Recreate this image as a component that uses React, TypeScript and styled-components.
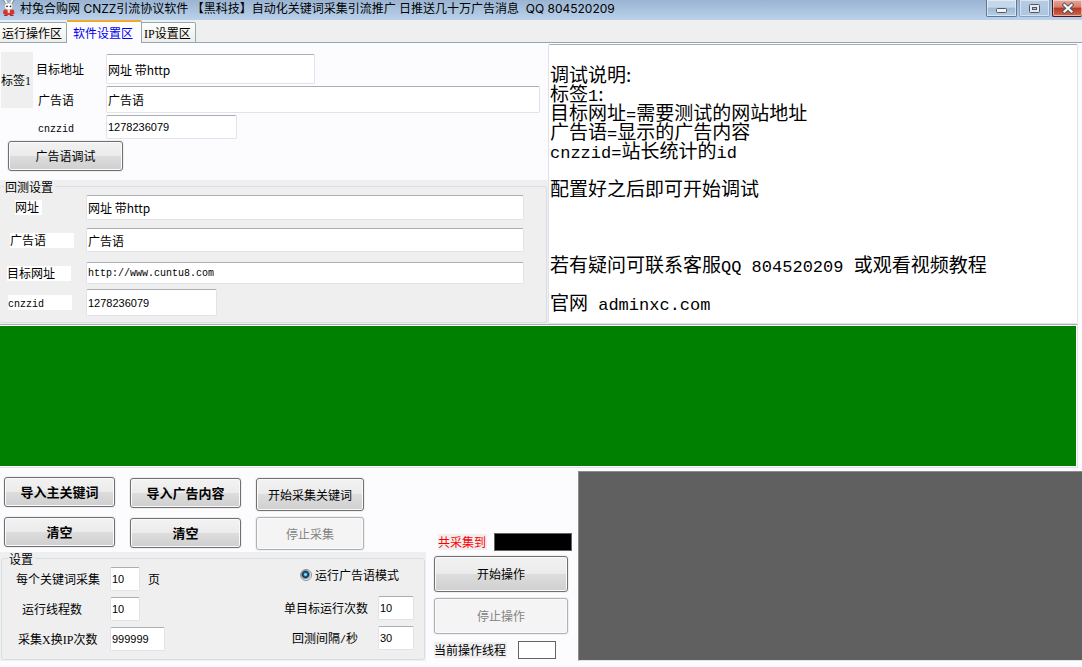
import React from "react";
import styled, { createGlobalStyle, css } from "styled-components";

const GlobalStyle = createGlobalStyle`
  *, *::before, *::after { box-sizing: border-box; }
  body {
    margin: 0;
    background: #fcfcff;
    color: #000;
    font-family: "Noto Sans CJK SC", sans-serif;
    font-size: 12px;
    line-height: 16px;
  }
  button, input { font: inherit; color: inherit; }
`;

const Window = styled.div`
  display: flex;
  flex-direction: column;
  min-height: 100vh;
  overflow-x: hidden;
`;

/* ---------- title bar ---------- */

const TitleBar = styled.header`
  display: flex;
  align-items: flex-start;
  height: 20px;
  padding-left: 1px;
  background: linear-gradient(#9ab4d1, #bad2eb);
`;

const TitleText = styled.h1`
  flex: 1;
  margin: 0 0 0 3px;
  font: 400 12px/18px Inter, "Noto Sans CJK SC", sans-serif;
  white-space: pre;
  overflow: hidden;
`;

const WindowButtons = styled.div`
  display: flex;
  gap: 2px;
`;

const WindowButton = styled.button<{ $tone: "normal" | "dim" | "close" }>`
  display: flex;
  align-items: center;
  justify-content: center;
  width: 31px;
  height: 17px;
  padding: 0;
  border: 1px solid #5f7896;
  border-top: 0;
  border-radius: 0 0 2px 2px;
  background: linear-gradient(#c5d7ea 45%, #9fb9d5 50%, #b7cee6);
  box-shadow: inset 0 0 0 1px rgba(255, 255, 255, 0.5);
  ${(p) => p.$tone === "dim" && css`
    border-color: #89a2c0;
    background: linear-gradient(#b6cbe3, #adc5e0);
  `}
  ${(p) => p.$tone === "close" && css`
    width: 30px;
    border-color: #4a1420;
    border-right: 0;
    background: linear-gradient(#e5a698 0, #d5806f 45%, #b8371f 50%, #cf6a50);
  `}
`;

/* ---------- tabs ---------- */

const TabBar = styled.nav`
  display: flex;
  align-items: flex-end;
  height: 23px;
  background: #efefef;
  box-shadow: inset 0 -1px 0 #8fa8b6;
`;

const Tab = styled.button<{ $active?: boolean }>`
  height: 21px;
  padding: 0 4px 0 2px;
  border: 1px solid #8fa8b6;
  border-left-width: 0;
  border-radius: 0 2px 0 0;
  background: linear-gradient(#fdfdfb, #efeee8);
  line-height: 18px;
  white-space: nowrap;
  ${(p) => p.$active && css`
    height: 23px;
    padding: 0 8px 0 6px;
    border-top: 2px solid #f5a62c;
    border-bottom: 0;
    background: #fcfcff;
    color: #0000f0;
  `}
`;

/* ---------- shared parts ---------- */

const Mono = styled.span<{ $size?: number }>`
  font-family: "Liberation Mono", monospace;
  font-size: ${(p) => p.$size ?? 10}px;
  line-height: 0;
`;

const Roman = styled.span`
  font-family: "Liberation Serif", serif;
  line-height: 0;
`;

const TextBox = styled.input<{ $w?: string; $face?: "digits" | "mono" }>`
  width: ${(p) => p.$w ?? "100%"};
  height: 100%;
  padding: 0 0 0 1px;
  border: 1px solid #e2e3ea;
  border-top-color: #abadb3;
  border-radius: 2px;
  background: #fff;
  ${(p) => p.$face === "digits" && css`
    font-family: "Liberation Sans", sans-serif;
    font-size: 11px;
  `}
  ${(p) => p.$face === "mono" && css`
    font-family: "Liberation Mono", monospace;
    font-size: 10px;
  `}
`;

const PushButton = styled.button<{ $w: number; $h: number; $bold?: boolean }>`
  width: ${(p) => p.$w}px;
  height: ${(p) => p.$h}px;
  padding: 0;
  border: 1px solid #707070;
  border-radius: 3px;
  background: linear-gradient(#f2f2f2, #ebebeb 50%, #dddddd 50%, #cfcfcf);
  box-shadow: inset 0 0 0 1px #fafafa, 0 0 0 1px #efefef;
  white-space: nowrap;
  ${(p) => p.$bold && css`
    font-size: 13px;
    font-weight: 700;
  `}
  &:disabled {
    border-color: #adb2b5;
    background: #f4f4f4;
    color: #838383;
  }
`;

/* ---------- upper half ---------- */

const UpperArea = styled.main`
  display: grid;
  grid-template-columns: minmax(0, 548fr) minmax(0, 530fr);
  padding-right: 4px;
`;

const LeftColumn = styled.div`
  display: flex;
  flex-direction: column;
`;

const TagForm = styled.section`
  display: flex;
  align-items: flex-start;
  gap: 3px;
  padding: 9px 8px 0 1px;
`;

const TagBox = styled.div`
  width: 32px;
  height: 56px;
  background: #efefef;
  line-height: 56px;
  white-space: nowrap;
`;

const TagFields = styled.div`
  display: grid;
  flex: 1;
  grid-template-columns: 70px minmax(0, 1fr);
  grid-template-rows: 30px 27px 24px;
  row-gap: 2px;
  align-items: center;
  padding-top: 2px;
`;

const TagLabel = styled.label<{ $indent?: boolean }>`
  padding-left: ${(p) => (p.$indent ? 2 : 0)}px;
`;

const DebugRow = styled.div`
  display: flex;
  padding: 2px 8px 9px;
`;

const BackTest = styled.section`
  flex: 1;
  background: #efefef;
  padding: 0 1px 1px 0;
`;

const GroupBox = styled.fieldset<{ $openLeft?: boolean }>`
  min-width: 0;
  height: 100%;
  margin: 0;
  padding: 0;
  border: 1px solid #d5dfe5;
  border-left-width: ${(p) => (p.$openLeft ? 0 : 1)}px;
  border-radius: 3px;
`;

const GroupLegend = styled.legend`
  margin-left: 4px;
  padding: 0 2px 0 1px;
  line-height: 13px;
`;

const BackTestRow = styled.div<{ $h: number; $gap: number }>`
  display: grid;
  grid-template-columns: 86px minmax(0, 1fr);
  align-items: center;
  height: ${(p) => p.$h}px;
  margin-bottom: ${(p) => p.$gap}px;
  padding-right: 22px;
`;

const BackTestLabel = styled.label<{ $x: number; $w: number }>`
  width: ${(p) => p.$w}px;
  height: 15px;
  margin-left: ${(p) => p.$x}px;
  background: #fff;
  line-height: 14px;
`;

const BackTestBody = styled.div`
  padding-top: 2px;
`;

const Notes = styled.article`
  margin-top: 1px;
  padding: 19px 1px 10px;
  border: 1px solid #e2e3ea;
  border-top-color: #abadb3;
  border-radius: 2px;
  background: #fff;
  font-size: 19px;
  line-height: 19px;
`;

const NoteLine = styled.p`
  height: 19px;
  margin: 0;
  white-space: pre;
`;

const OutputPanel = styled.section`
  height: 144px;
  margin-right: 4px;
  padding: 1px 1px 1px 0;
  border: 1px solid #e2e3ea;
  border-top-color: #abadb3;
  border-left: 0;
  background: #008000;
  background-clip: content-box;
`;

/* ---------- lower half ---------- */

const LowerArea = styled.footer`
  display: flex;
  flex: 1;
  align-items: flex-start;
`;

const CollectColumn = styled.div`
  width: 426px;
`;

const CollectButtons = styled.div`
  display: flex;
  gap: 15px;
  height: 84px;
  padding: 9px 0 0 4px;
`;

const ButtonStack = styled.div<{ $gap: number; $top?: number }>`
  display: flex;
  flex-direction: column;
  gap: ${(p) => p.$gap}px;
  padding-top: ${(p) => p.$top ?? 0}px;
`;

const Settings = styled.section`
  height: 109px;
  padding: 0 1px 1px;
  background: #efefef;

  legend { margin-left: 6px; }
`;

const SettingsBody = styled.div`
  display: flex;
  justify-content: space-between;
  padding: 2px 10px 0 14px;
`;

const SettingsColumn = styled.div`
  display: flex;
  flex-direction: column;
  gap: 6px;
`;

const SettingRow = styled.div<{ $indent?: number }>`
  display: flex;
  align-items: center;
  gap: 8px;
  height: 24px;
  white-space: nowrap;
  label {
    width: 86px;
    padding-left: ${(p) => p.$indent ?? 0}px;
  }
`;

const ModeOption = styled.label`
  display: flex;
  align-items: center;
  gap: 3px;
  height: 23px;
  padding: 0 0 7px 16px;
`;

const Radio = styled.input`
  appearance: none;
  width: 12px;
  height: 12px;
  margin: 0;
  border: 1px solid #8e8f8f;
  border-radius: 50%;
  background: radial-gradient(circle at 45% 45%, #7fd3f2 0 1px, #1b5f8c 2px, #12334f 3px, #e3e9ee 5px, #f6f6f6);
`;

const RunColumn = styled.div`
  width: 152px;
  padding: 65px 0 0 8px;
`;

const CounterRow = styled.div`
  display: flex;
  align-items: center;
  justify-content: space-between;
  height: 18px;
  margin-bottom: 5px;
  padding: 0 6px 0 4px;
  color: #f00;
`;

const ThreadRow = styled.div`
  display: flex;
  align-items: center;
  gap: 11px;
  height: 18px;
  margin-top: 7px;
`;

const Tagline = styled.span`
  padding-right: 1px;
  background: #efefef;
`;

const Readout = styled.output<{ $w: number; $fill: string }>`
  width: ${(p) => p.$w}px;
  height: 18px;
  border: 1px solid #646464;
  background: ${(p) => p.$fill};
`;

const LogPanel = styled.section`
  flex: 1;
  height: 190px;
  margin-top: 3px;
  border: 1px solid #8c8c90;
  border-right: 0;
  border-bottom-color: #e2e3ea;
  background: #606060;
`;

function RabbitIcon() {
  return (
    <svg width="16" height="17" viewBox="0 0 16 17" aria-hidden="true">
      <path d="M3.500 0 L6 4 M12 0 L9.500 4" stroke="#fff" strokeWidth="2.200" />
      <path d="M2.500 0 L4.500 3.500 M13 0 L11 3.500" stroke="#666" strokeWidth="0.800" />
      <ellipse cx="7.700" cy="6.500" rx="4.200" ry="3.500" fill="#fff" stroke="#9a9a9a" strokeWidth="0.600" />
      <circle cx="6" cy="6.300" r="0.900" fill="#222" />
      <circle cx="9.500" cy="6.300" r="0.900" fill="#222" />
      <path d="M2.500 10 Q5 8.800 7.700 10.500 Q10.500 8.800 13 10 L13.500 13.500 Q10.500 16 7.700 14.800 Q5 16 2 13.500 Z" fill="#d8342c" />
      <path d="M6.500 9.800 L9 9.800 L8.700 13 L6.800 13 Z" fill="#f7d8d4" />
      <path d="M3 15.500 H6.500 M9 15.500 H12.500" stroke="#8c3a38" />
    </svg>
  );
}

const notes: React.ReactNode[] = [
  "调试说明:",
  <>标签<Mono $size={17}>1</Mono>:</>,
  <>目标网址<Mono $size={17}>=</Mono>需要测试的网站地址</>,
  <>广告语<Mono $size={17}>=</Mono>显示的广告内容</>,
  <><Mono $size={17}>cnzzid=</Mono>站长统计的<Mono $size={17}>id</Mono></>,
  "",
  "配置好之后即可开始调试",
  "",
  "",
  "",
  <>若有疑问可联系客服<Mono $size={17}>QQ 804520209 </Mono>或观看视频教程</>,
  "",
  <>官网<Mono $size={17}> adminxc.com</Mono></>,
];

export default function App() {
  return (
    <Window>
      <GlobalStyle />
      <TitleBar>
        <RabbitIcon />
        <TitleText>村兔合购网 CNZZ引流协议软件 【黑科技】自动化关键词采集引流推广 日推送几十万广告消息  QQ 804520209</TitleText>
        <WindowButtons>
          <WindowButton $tone="normal" aria-label="最小化">
            <svg width="12" height="12" viewBox="0 0 12 12">
              <rect x="0.500" y="6.500" width="10" height="4" rx="1" fill="#f4f4f4" stroke="#535666" />
            </svg>
          </WindowButton>
          <WindowButton $tone="dim" aria-label="最大化">
            <svg width="12" height="12" viewBox="0 0 12 12">
              <rect x="0.500" y="2.500" width="10" height="8" rx="1" fill="#e6e9ee" stroke="#535666" />
              <rect x="3.500" y="5.500" width="4" height="2" fill="#a9c2de" stroke="#535666" />
            </svg>
          </WindowButton>
          <WindowButton $tone="close" aria-label="关闭">
            <svg width="12" height="12" viewBox="0 0 12 12">
              <path d="M2.500 3 L9.500 9.500 M9.500 3 L2.500 9.500" stroke="#535666" strokeWidth="4" strokeLinecap="square" />
              <path d="M2.500 3 L9.500 9.500 M9.500 3 L2.500 9.500" stroke="#f6f6f6" strokeWidth="2.200" strokeLinecap="square" />
            </svg>
          </WindowButton>
        </WindowButtons>
      </TitleBar>

      <TabBar>
        <Tab>运行操作区</Tab>
        <Tab $active>软件设置区</Tab>
        <Tab><Roman>IP</Roman>设置区</Tab>
      </TabBar>

      <UpperArea>
        <LeftColumn>
          <TagForm>
            <TagBox>标签<Roman>1</Roman></TagBox>
            <TagFields>
              <TagLabel htmlFor="tag-url">目标地址</TagLabel>
              <TextBox id="tag-url" $w="209px" defaultValue="网址 带http" />
              <TagLabel htmlFor="tag-ad" $indent>广告语</TagLabel>
              <TextBox id="tag-ad" defaultValue="广告语" />
              <TagLabel htmlFor="tag-id" $indent><Mono>cnzzid</Mono></TagLabel>
              <TextBox id="tag-id" $w="131px" $face="digits" defaultValue="1278236079" />
            </TagFields>
          </TagForm>
          <DebugRow>
            <PushButton $w={115} $h={30}>广告语调试</PushButton>
          </DebugRow>
          <BackTest>
            <GroupBox $openLeft>
              <GroupLegend>回测设置</GroupLegend>
              <BackTestBody>
                <BackTestRow $h={25} $gap={8}>
                  <BackTestLabel htmlFor="bt-site" $x={15} $w={27}>网址</BackTestLabel>
                  <TextBox id="bt-site" defaultValue="网址 带http" />
                </BackTestRow>
                <BackTestRow $h={24} $gap={10}>
                  <BackTestLabel htmlFor="bt-ad" $x={10} $w={64}>广告语</BackTestLabel>
                  <TextBox id="bt-ad" defaultValue="广告语" />
                </BackTestRow>
                <BackTestRow $h={22} $gap={5}>
                  <BackTestLabel htmlFor="bt-url" $x={7} $w={64}>目标网址</BackTestLabel>
                  <TextBox id="bt-url" $face="mono" defaultValue="http://www.cuntu8.com" />
                </BackTestRow>
                <BackTestRow $h={27} $gap={6}>
                  <BackTestLabel htmlFor="bt-id" $x={8} $w={64}><Mono>cnzzid</Mono></BackTestLabel>
                  <TextBox id="bt-id" $w="131px" $face="digits" defaultValue="1278236079" />
                </BackTestRow>
              </BackTestBody>
            </GroupBox>
          </BackTest>
        </LeftColumn>
        <Notes>
          {notes.map((line, i) => (
            <NoteLine key={i}>{line}</NoteLine>
          ))}
        </Notes>
      </UpperArea>

      <OutputPanel />

      <LowerArea>
        <CollectColumn>
          <CollectButtons>
            <ButtonStack $gap={10}>
              <PushButton $w={111} $h={30} $bold>导入主关键词</PushButton>
              <PushButton $w={111} $h={30} $bold>清空</PushButton>
            </ButtonStack>
            <ButtonStack $gap={10} $top={1}>
              <PushButton $w={111} $h={30} $bold>导入广告内容</PushButton>
              <PushButton $w={111} $h={30} $bold>清空</PushButton>
            </ButtonStack>
            <ButtonStack $gap={6} $top={1}>
              <PushButton $w={108} $h={33}>开始采集关键词</PushButton>
              <PushButton $w={108} $h={33} disabled>停止采集</PushButton>
            </ButtonStack>
          </CollectButtons>
          <Settings>
            <GroupBox>
              <GroupLegend>设置</GroupLegend>
              <SettingsBody>
                <SettingsColumn>
                  <SettingRow>
                    <label htmlFor="pages">每个关键词采集</label>
                    <TextBox id="pages" $w="30px" $face="digits" defaultValue="10" />
                    <span>页</span>
                  </SettingRow>
                  <SettingRow $indent={6}>
                    <label htmlFor="threads">运行线程数</label>
                    <TextBox id="threads" $w="30px" $face="digits" defaultValue="10" />
                  </SettingRow>
                  <SettingRow $indent={2}>
                    <label htmlFor="swap">采集<Roman>X</Roman>换<Roman>IP</Roman>次数</label>
                    <TextBox id="swap" $w="55px" $face="digits" defaultValue="999999" />
                  </SettingRow>
                </SettingsColumn>
                <SettingsColumn>
                  <ModeOption>
                    <Radio type="radio" name="mode" defaultChecked />
                    运行广告语模式
                  </ModeOption>
                  <SettingRow>
                    <label htmlFor="runs">单目标运行次数</label>
                    <TextBox id="runs" $w="36px" $face="digits" defaultValue="10" />
                  </SettingRow>
                  <SettingRow $indent={8}>
                    <label htmlFor="interval">回测间隔<Mono>/</Mono>秒</label>
                    <TextBox id="interval" $w="36px" $face="digits" defaultValue="30" />
                  </SettingRow>
                </SettingsColumn>
              </SettingsBody>
            </GroupBox>
          </Settings>
        </CollectColumn>

        <RunColumn>
          <CounterRow>
            <Tagline>共采集到</Tagline>
            <Readout $w={78} $fill="#000" />
          </CounterRow>
          <ButtonStack $gap={6}>
            <PushButton $w={134} $h={36}>开始操作</PushButton>
            <PushButton $w={134} $h={36} disabled>停止操作</PushButton>
          </ButtonStack>
          <ThreadRow>
            <Tagline>当前操作线程</Tagline>
            <Readout $w={38} $fill="#fff" />
          </ThreadRow>
        </RunColumn>

        <LogPanel />
      </LowerArea>
    </Window>
  );
}
